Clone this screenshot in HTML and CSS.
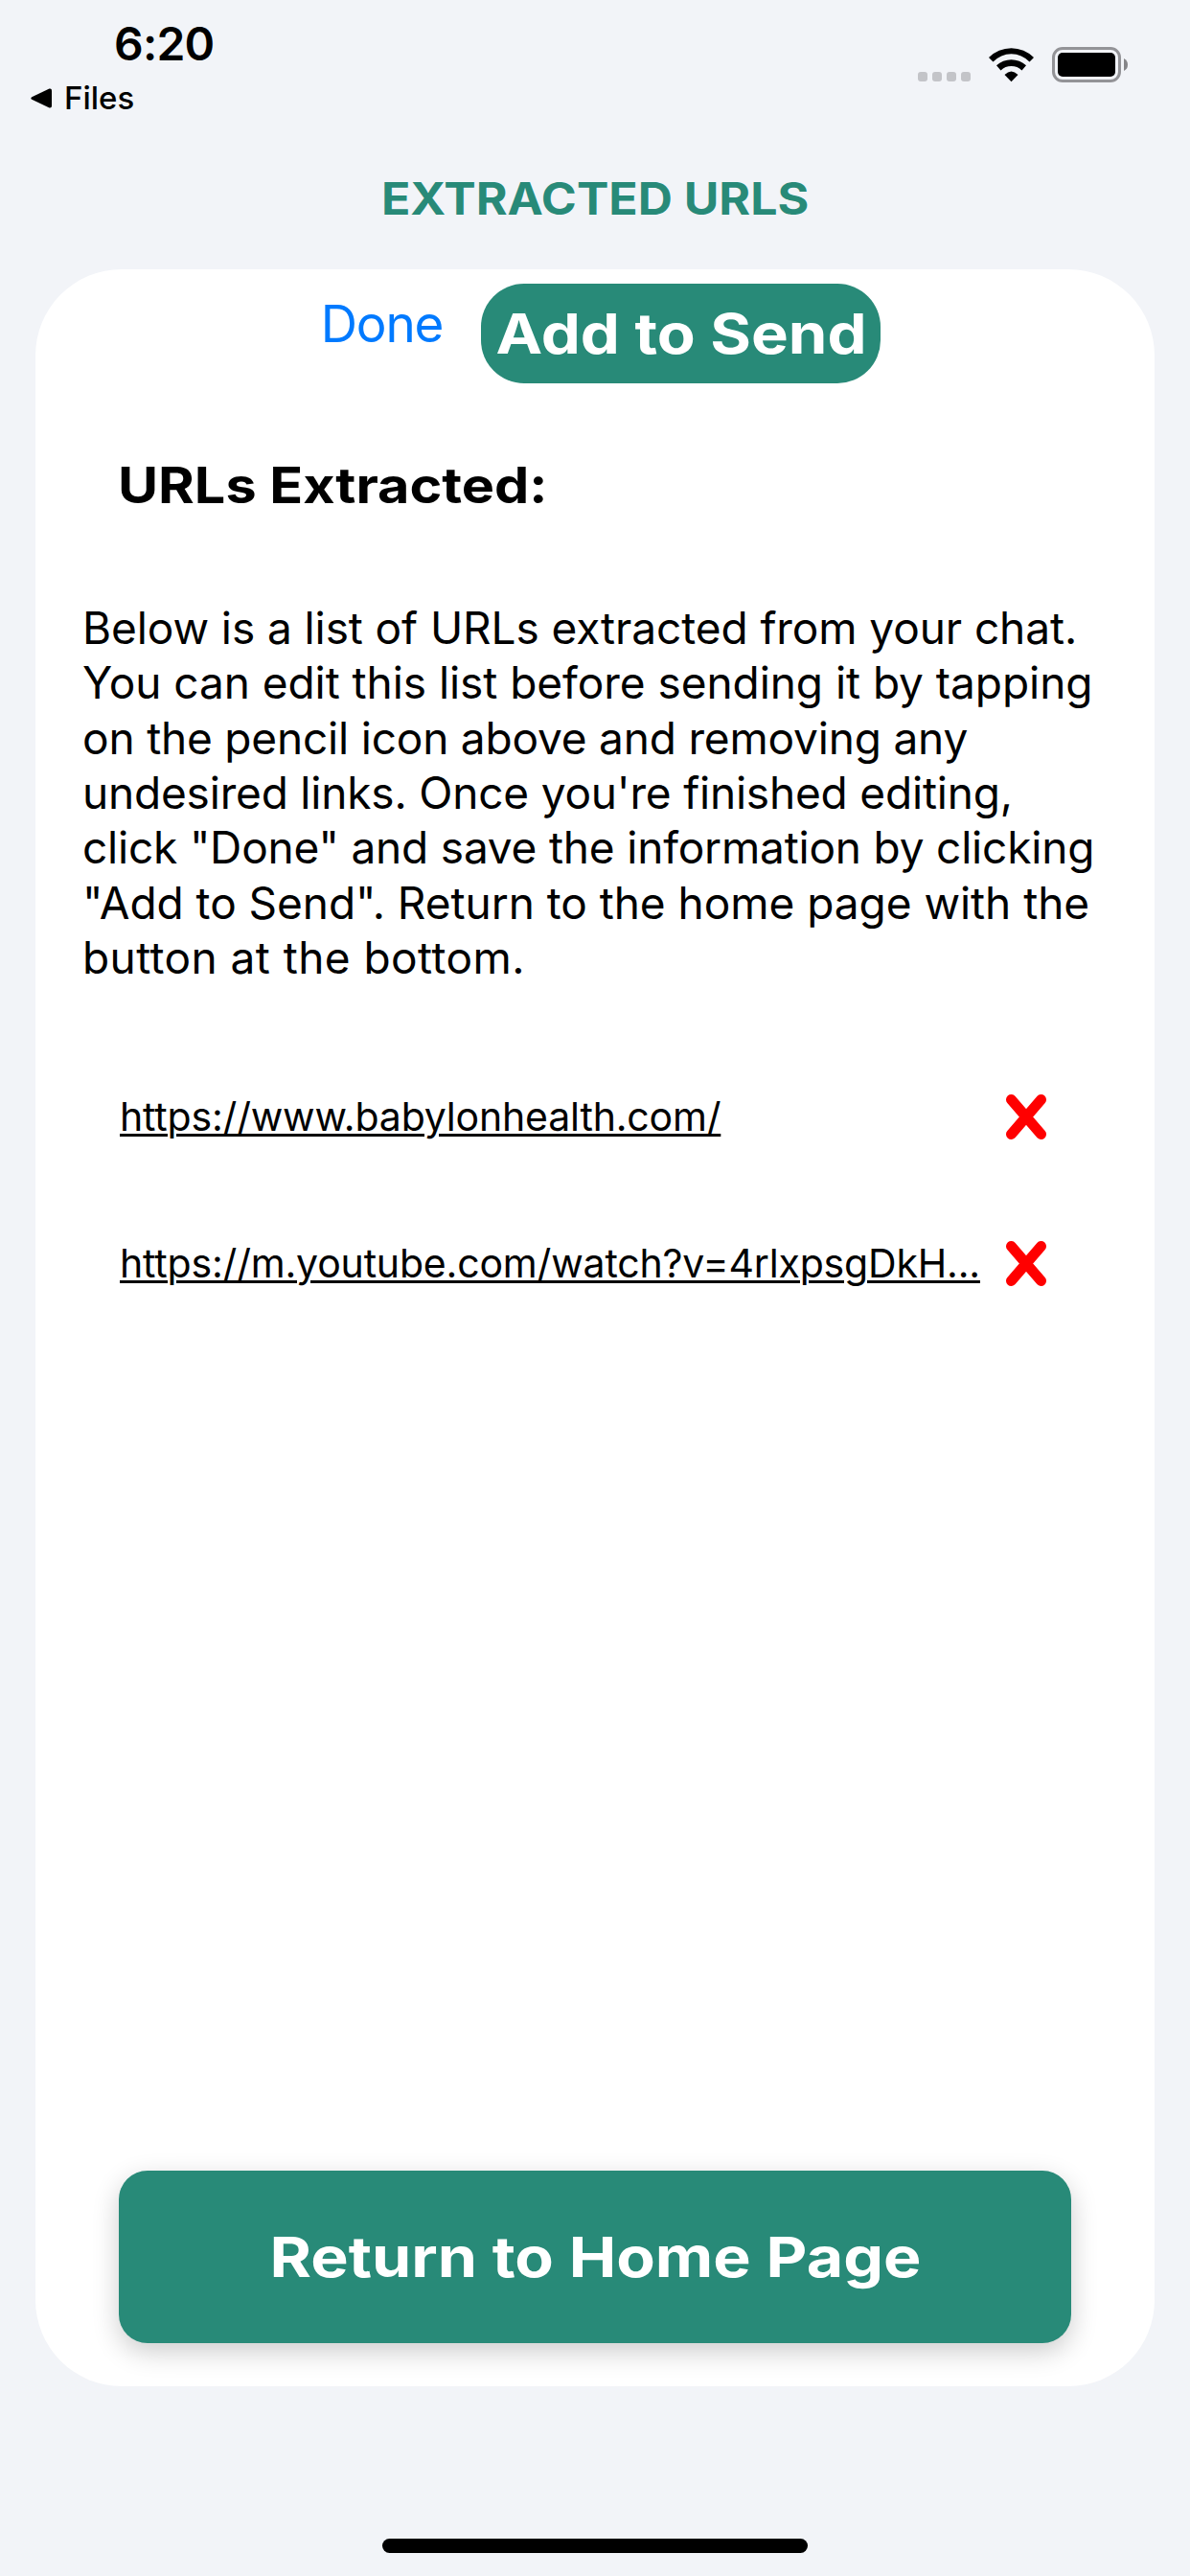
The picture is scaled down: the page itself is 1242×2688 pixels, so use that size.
FILE: index.html
```html
<!DOCTYPE html>
<html lang="en">
<head>
<meta charset="utf-8">
<title>Extracted URLs</title>
<link rel="stylesheet" href="styles.css">
</head>
<body>
<div class="screen">
  <header class="status">
    <div class="status-left">
      <div class="time">6:20</div>
      <div class="back">
        <svg class="back-arrow" viewBox="0 0 22 21"><path d="M1.2 9.2 19.5.5Q22 0 22 2.5V18.5Q22 21 19.5 20.5L1.2 11.8Q-.6 10.500 1.200 9.200Z"/></svg>
        <span class="back-label">Files</span>
      </div>
    </div>
    <div class="status-right">
      <div class="signal"><i></i><i></i><i></i><i></i></div>
      <svg class="wifi" viewBox="0 0 49 38"><path d="M1 12A33 33 0 0 1 48 12L43.500 16.500A26 26 0 0 0 5.500 16.500Z"/><path d="M9 20.200A23 23 0 0 1 40 20.200L35.500 25.500A16 16 0 0 0 13.500 25.500Z"/><path d="M17.500 30Q24.500 22.800 31.500 30L24.500 37.200Z"/></svg>
      <svg class="battery" viewBox="0 0 80 37"><rect x="1.500" y="1.500" width="69" height="34" rx="9.500" fill="none" stroke="#939397" stroke-width="3"/><rect x="6" y="6" width="60" height="25" rx="5"/><path d="M75 12Q79 14 79 18.500T75 25Z" fill="#858588"/></svg>
    </div>
  </header>
  <h1 class="title"><span>EXTRACTED URLS</span></h1>
  <main class="card">
    <div class="toolbar">
      <a class="done">Done</a>
      <button class="add"><span>Add to Send</span></button>
    </div>
    <h2 class="heading"><span>URLs Extracted:</span></h2>
    <p class="intro">
      <span class="l1">Below is a list of URLs extracted from your chat.</span><br>
      <span class="l2">You can edit this list before sending it by tapping</span><br>
      <span class="l3">on the pencil icon above and removing any</span><br>
      <span class="l4">undesired links. Once you're finished editing,</span><br>
      <span class="l5">click "Done" and save the information by clicking</span><br>
      <span class="l6">"Add to Send". Return to the home page with the</span><br>
      <span class="l7">button at the bottom.</span>
    </p>
    <ul class="links">
      <li><a>https://www.babylonhealth.com/</a><svg class="remove" viewBox="0 0 42 47"><path d="M5.500 5.500 36.500 41.500M36.500 5.500 5.500 41.500"/></svg></li>
      <li><a>https://m.youtube.com/watch?v=4rlxpsgDkH...</a><svg class="remove" viewBox="0 0 42 47"><path d="M5.500 5.500 36.500 41.500M36.500 5.500 5.500 41.500"/></svg></li>
    </ul>
    <button class="home"><span>Return to Home Page</span></button>
  </main>
  <div class="indicator"></div>
</div>
</body>
</html>
```

FILE: styles.css
```css
* { box-sizing: border-box; margin: 0; padding: 0; }
body { background: #f2f4f8; font-family: Inter, "Liberation Sans", sans-serif; color: #000; }
.screen { width: 1242px; height: 2688px; display: flex; flex-direction: column; overflow: hidden; }

.status { height: 132px; display: flex; justify-content: space-between; flex: none; }
.status-left { padding: 16px 0 0 32px; }
.time { padding-left: 87px; font-size: 48px; line-height: 60px; font-weight: 600; letter-spacing: -.8px; }
.back { display: flex; align-items: center; gap: 13px; height: 40px; margin-top: 6px; }
.back-arrow { width: 22px; height: 21px; }
.back-label { font-size: 33px; line-height: 40px; font-weight: 500; }
.status-right { display: flex; align-items: flex-start; padding: 48px 64px 0 0; }
.signal { display: flex; gap: 5px; margin: 27px 18px 0 0; }
.signal i { width: 10px; height: 10px; border-radius: 3px; background: #c3c4c8; }
.wifi { width: 49px; height: 38px; margin-right: 18px; }
.battery { width: 80px; height: 37px; margin-top: 1px; }

/* Wide display lettering for headings and buttons */
.title span, .add span, .heading span, .home span { display: inline-block; }
.title span { transform: scaleX(1.088); }
.add span { transform: scaleX(1.125); }
.heading span { transform: scaleX(1.106); transform-origin: left; }
.home span { transform: scaleX(1.143); }

.title { height: 149px; flex: none; text-align: center; font-size: 46px; line-height: 151px; font-weight: 700; color: #288a78; white-space: nowrap; }

.card { width: 1168px; height: 2209px; flex: none; margin: 0 37px; padding: 15px 0 45px; border-radius: 90px; background: #fff; display: flex; flex-direction: column; }
.toolbar { display: flex; justify-content: center; align-items: flex-start; gap: 40px; height: 104px; padding-left: 12px; }
.done { font-size: 53px; line-height: 64px; margin-top: 10px; letter-spacing: -1.2px; color: #007aff; }
.add { width: 417px; height: 104px; border: 0; border-radius: 45px; background: #288a78; color: #fff; font: 700 58px/104px Inter, sans-serif; white-space: nowrap; }
.heading { margin: 74px 0 0 86px; font-size: 52px; line-height: 66px; font-weight: 700; white-space: nowrap; }
.intro { margin: 87px 0 0 49px; font-size: 46px; line-height: 57.33px; white-space: nowrap; }
.l1 { letter-spacing: -.09px; }
.l2 { letter-spacing: -.05px; }
.l3, .l4, .l5 { letter-spacing: -.19px; }
.l6 { letter-spacing: -.04px; }
.l7 { letter-spacing: .43px; }
.links { list-style: none; margin: 61px 113px 0 88px; }
.links li { display: flex; align-items: center; justify-content: space-between; height: 153px; }
.links a { font-size: 41px; line-height: 50px; margin-top: -1px; letter-spacing: -.18px; white-space: nowrap; text-decoration: underline; text-decoration-thickness: 3px; text-underline-offset: 3px; }
.remove { width: 42px; height: 47px; fill: none; stroke: #f00; stroke-width: 11; stroke-linecap: round; }
.home { margin: auto 87px 0; height: 180px; border: 0; border-radius: 30px; background: #288a78; color: #fff; font: 700 58px/180px Inter, sans-serif; white-space: nowrap; box-shadow: 0 9px 28px rgba(0, 0, 0, .2); }
.indicator { width: 444px; height: 15px; margin: 159px auto 0; border-radius: 8px; background: #000; flex: none; }
```
